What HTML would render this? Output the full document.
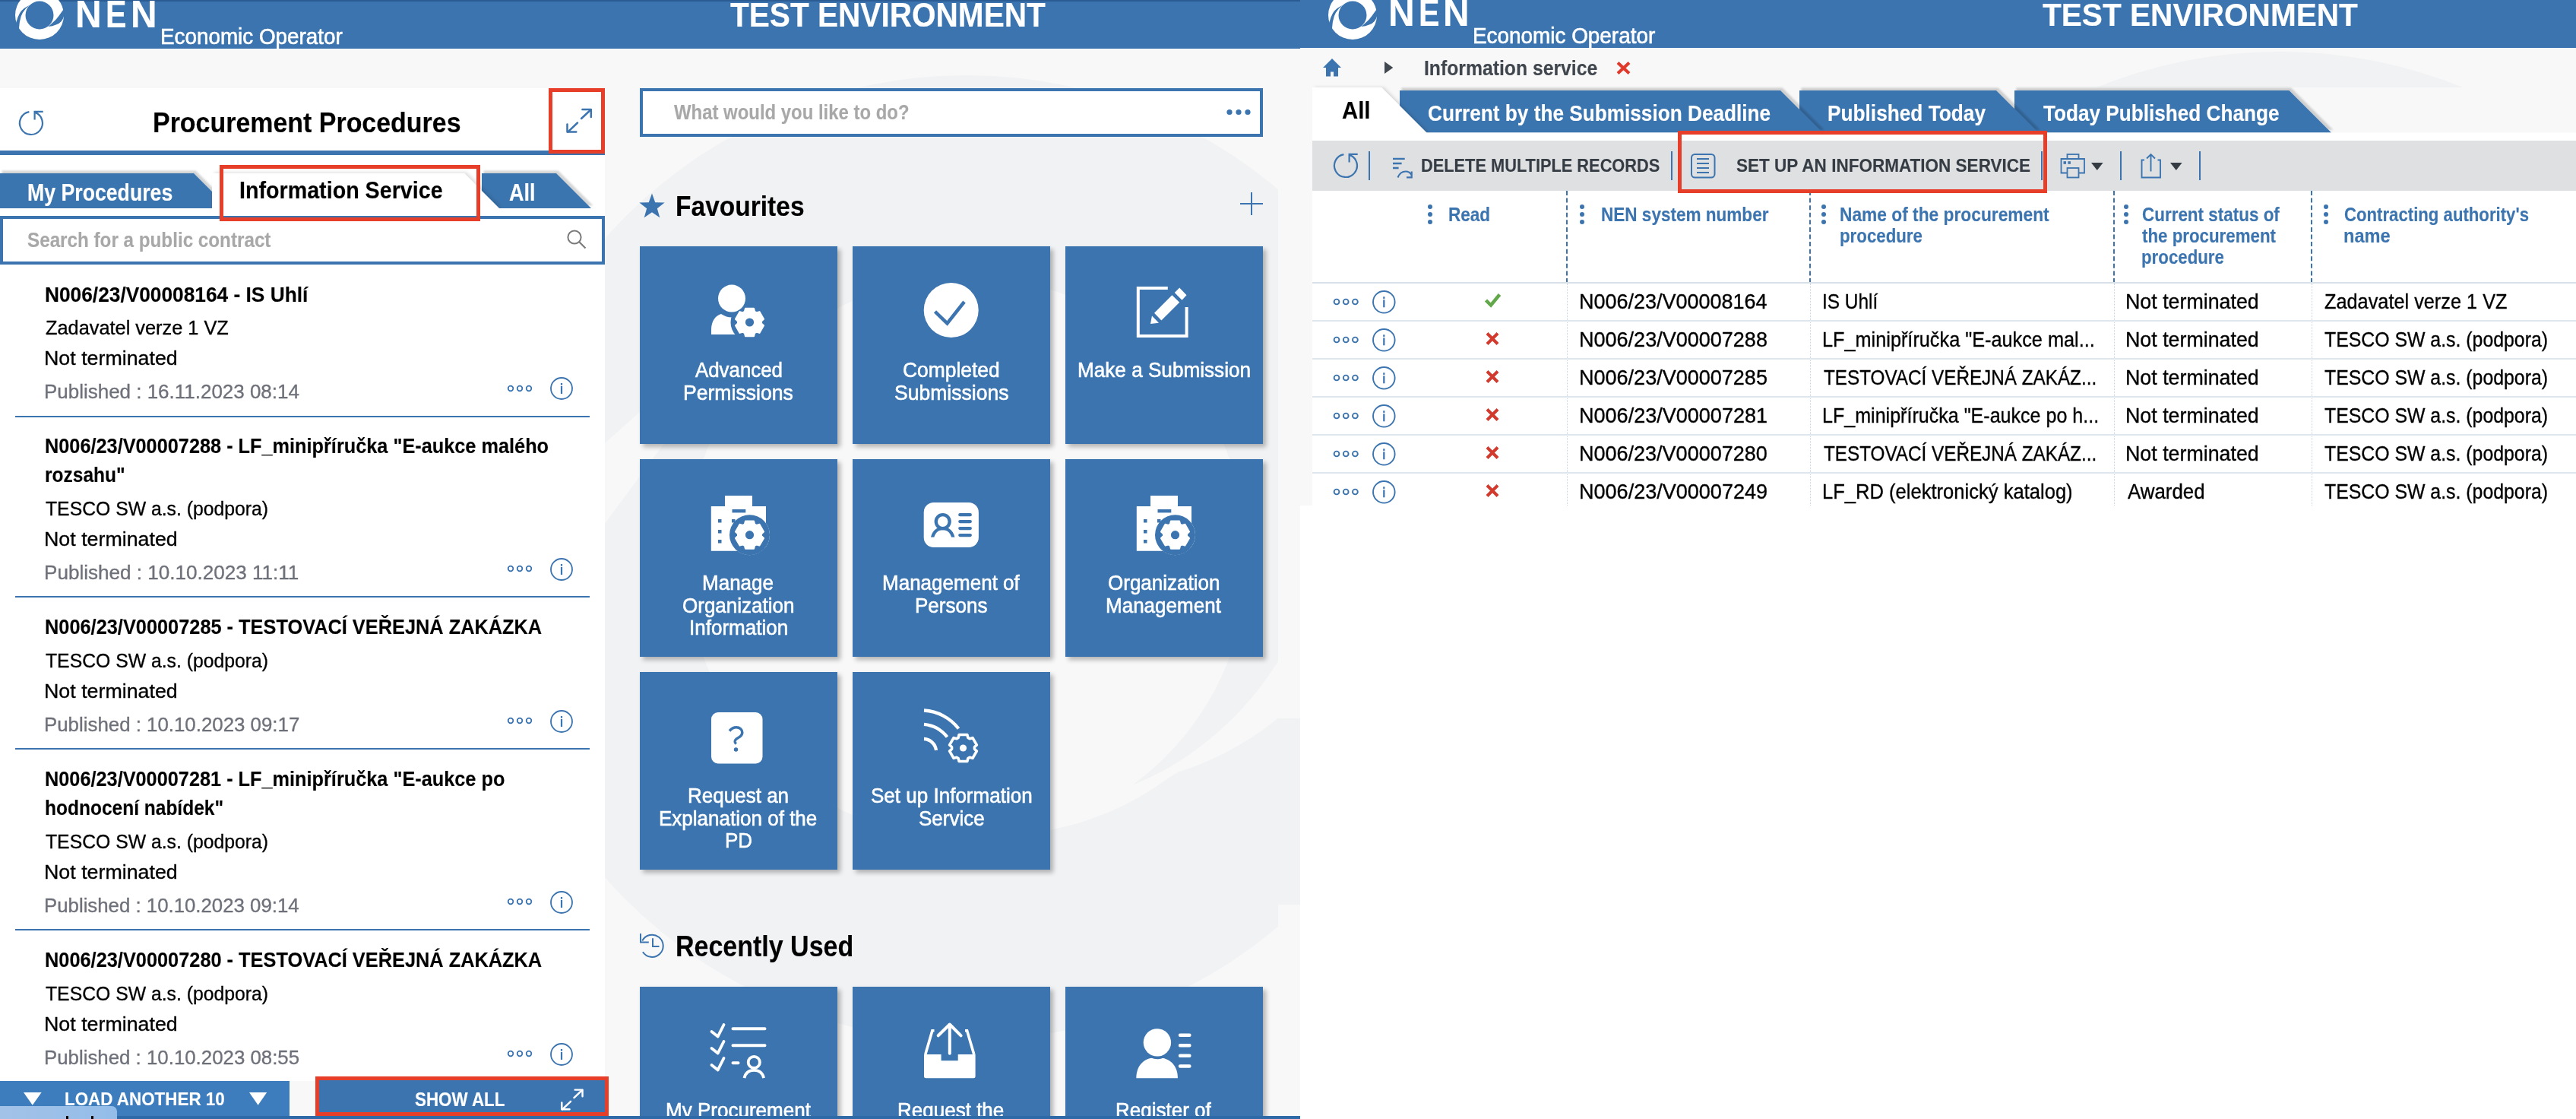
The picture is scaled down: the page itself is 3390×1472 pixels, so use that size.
<!DOCTYPE html><html><head><meta charset="utf-8"><style>html,body{margin:0;padding:0;}body{width:3390px;height:1472px;position:relative;overflow:hidden;background:#f8f8f8;font-family:"Liberation Sans",sans-serif;}</style></head><body>
<div style="position:absolute;left:796px;top:63px;width:915px;height:1409px;overflow:hidden;background:#f8f8f8">
<svg width="915" height="1409" viewBox="796 63 915 1409" style="position:absolute;left:0;top:0"><circle cx="1272" cy="734" r="635" fill="#f1f2f4"/><circle cx="1272" cy="734" r="370" fill="#f8f8f8"/><path d="M1809.9,781.1 L1800.3,800.1 L1790.0,818.4 L1779.1,836.1 L1767.6,853.1 L1755.5,869.4 L1743.0,884.9 L1729.9,899.7 L1716.4,913.8 L1702.5,927.1 L1688.3,939.6 L1673.7,951.3 L1658.8,962.2 L1643.6,972.3 L1628.2,981.5 L1612.7,990.0 L1597.0,997.7 L1581.3,1004.6 L1565.5,1010.6 L1549.6,1015.9 L1537.0,1023.9 L1525.1,1032.3 L1512.9,1040.3 L1500.4,1047.8 L1487.7,1054.7 L1474.8,1061.2 L1461.8,1067.2 L1448.6,1072.6 L1435.2,1077.5 L1421.7,1081.9 L1408.1,1085.8 L1394.5,1089.1 L1380.7,1091.9 L1367.1,1094.8 L1353.5,1097.3 L1339.8,1099.2 L1326.0,1100.6 L1312.3,1101.5 L1298.6,1101.9 L1284.8,1101.8 L1284.8,1099.8 L1298.4,1099.2 L1311.9,1098.2 L1325.5,1096.7 L1338.9,1094.6 L1352.3,1092.1 L1365.6,1089.0 L1378.8,1085.5 L1391.8,1081.4 L1404.7,1076.9 L1417.4,1071.9 L1429.9,1066.5 L1442.3,1060.6 L1454.4,1054.2 L1466.2,1047.3 L1477.9,1040.1 L1489.7,1033.1 L1502.9,1027.6 L1515.9,1021.5 L1528.8,1014.9 L1541.6,1007.7 L1554.2,1000.0 L1566.5,991.7 L1578.7,982.8 L1590.5,973.4 L1602.3,963.5 L1613.8,953.1 L1625.0,942.2 L1635.8,930.8 L1646.3,918.9 L1656.4,906.4 L1666.1,893.4 L1675.3,880.0 L1684.6,866.2 L1695.1,852.5 L1705.2,838.1 L1714.7,823.1 L1723.8,807.6 L1732.3,791.6 L1740.2,775.0Z" fill="#f8f8f8"/><path d="M1052.5,442.7 L894.9,494.7 L768.9,607.2 L690.3,724.4 L641.8,841.8 L596.4,979.6 L697.4,973.8 L731.5,816.3 L790.4,696.4 L884.4,569.3 L1004.8,468.1Z" fill="#f8f8f8"/><rect x="1682" y="241" width="29" height="704" fill="#f8f8f8"/><rect x="1682" y="945" width="29" height="245" fill="#f1f2f4"/><rect x="1682" y="1190" width="29" height="282" fill="#f8f8f8"/></svg>
</div>
<div style="position:absolute;left:0px;top:0px;width:1711px;height:63.5px;background:#3b74af;"></div>
<div style="position:absolute;left:0px;top:0px;width:1711px;height:2px;background:#2b5b93;"></div>
<svg style="position:absolute;left:0px;top:0px;overflow:visible;" width="100" height="60" viewBox="0 0 100 60"><circle cx="52" cy="20" r="32" fill="#fff"/><circle cx="52" cy="20" r="18.5" fill="#3b74af"/><path d="M39,7 Q30,10.5 26,17.2 Q23,22.5 21.3,29.8 L16,40 L25,37 Q25.6,27.9 27.7,21.5 Q29.5,16.5 31.5,14.5 Q34,10.5 39,7Z" fill="#3b74af"/><path d="M86,9 L84,21.5 Q83,25.5 80.8,27.9 Q78,31 74.4,32.2 Q69,34.5 63.1,35.1 Q66.5,32.5 69,30 Q72,27.5 74.4,24.7 Q77.5,21 79.7,17.7 L86,9Z" fill="#3b74af"/></svg>
<div style="position:absolute;left:99.48px;top:-6.22px;font-size:50.72px;line-height:50.72px;font-weight:700;color:#fff;white-space:nowrap;transform:scaleX(0.9456);transform-origin:0 0;-webkit-text-stroke:0.15px #fff;">N</div>
<div style="position:absolute;left:139.32px;top:-6.22px;font-size:50.72px;line-height:50.72px;font-weight:700;color:#fff;white-space:nowrap;transform:scaleX(0.8130);transform-origin:0 0;-webkit-text-stroke:0.15px #fff;">E</div>
<div style="position:absolute;left:171.69px;top:-6.22px;font-size:50.72px;line-height:50.72px;font-weight:700;color:#fff;white-space:nowrap;transform:scaleX(0.9423);transform-origin:0 0;-webkit-text-stroke:0.15px #fff;">N</div>
<div style="position:absolute;left:211.27px;top:34.01px;font-size:28.70px;line-height:28.70px;font-weight:400;color:#fff;white-space:nowrap;transform:scaleX(0.9702);transform-origin:0 0;-webkit-text-stroke:0.6px #fff;">Economic Operator</div>
<div style="position:absolute;left:960.59px;top:-1.36px;font-size:43.48px;line-height:43.48px;font-weight:700;color:#fff;white-space:nowrap;transform:scaleX(0.9335);transform-origin:0 0;-webkit-text-stroke:0.15px #fff;">TEST ENVIRONMENT</div>
<div style="position:absolute;left:0px;top:116px;width:796px;height:1356px;background:#fff;"></div>
<svg style="position:absolute;left:23.5px;top:144.5px;overflow:visible;" width="34" height="34" viewBox="0 0 34 34"><path d="M14.4,2.2 A15,15 0 1 0 22.1,2.9" fill="none" stroke="#3b74af" stroke-width="2.2"/><path d="M21.6,12.4 L21.6,1.8 L32.7,1.8" fill="none" stroke="#3b74af" stroke-width="2.2"/></svg>
<div style="position:absolute;left:200.59px;top:142.82px;font-size:37.39px;line-height:37.39px;font-weight:700;color:#000;white-space:nowrap;transform:scaleX(0.9081);transform-origin:0 0;-webkit-text-stroke:0.15px #000;">Procurement Procedures</div>
<svg style="position:absolute;left:745px;top:141px;overflow:visible;" width="34.0" height="34.0" viewBox="0 0 34.0 34.0"><g transform="scale(1.0)" fill="none" stroke="#3b74af" stroke-width="2.50" stroke-linecap="round" stroke-linejoin="round"><path d="M21.4,3 L32.8,3 L32.8,13"/><path d="M32.3,3.5 L20,15"/><path d="M15,20.5 L2.3,32.7"/><path d="M1.5,22.4 L1.5,32.5 L13.3,32.5"/></g></svg>
<div style="position:absolute;left:0px;top:198px;width:796px;height:5.5px;background:#3b74af;"></div>
<svg style="position:absolute;left:0;top:200px;overflow:visible" width="796" height="90" viewBox="0 200 796 90"><defs><filter id="ts" x="-10%" y="-50%" width="120%" height="200%"><feDropShadow dx="2.5" dy="-3.5" stdDeviation="1.3" flood-color="#000" flood-opacity="0.17"/></filter><filter id="tw" x="-10%" y="-50%" width="120%" height="200%"><feDropShadow dx="3" dy="-1.5" stdDeviation="2" flood-color="#000" flood-opacity="0.12"/></filter></defs><polygon points="634,228 732,228 778,274 634,274" fill="#3b74af" filter="url(#ts)"/><polygon points="0,228 255,228 301,274 0,274" fill="#3b74af" filter="url(#ts)"/><polygon points="279,228 611,228 657,274 279,274" fill="#fff" filter="url(#tw)"/><rect x="0" y="274" width="796" height="10" fill="#fff"/></svg>
<div style="position:absolute;left:35.77px;top:237.93px;font-size:30.43px;line-height:30.43px;font-weight:700;color:#fff;white-space:nowrap;transform:scaleX(0.8767);transform-origin:0 0;-webkit-text-stroke:0.15px #fff;">My Procedures</div>
<div style="position:absolute;left:314.74px;top:234.74px;font-size:31.59px;line-height:31.59px;font-weight:700;color:#000;white-space:nowrap;transform:scaleX(0.9078);transform-origin:0 0;-webkit-text-stroke:0.15px #000;">Information Service</div>
<div style="position:absolute;left:670.32px;top:237.93px;font-size:30.43px;line-height:30.43px;font-weight:700;color:#fff;white-space:nowrap;transform:scaleX(0.8873);transform-origin:0 0;-webkit-text-stroke:0.15px #fff;">All</div>
<div style="position:absolute;left:0;top:284px;width:788px;height:55.5px;border:4px solid #3b74af;background:#fff"></div>
<div style="position:absolute;left:35.77px;top:301.90px;font-size:28.12px;line-height:28.12px;font-weight:700;color:#a8a8a8;white-space:nowrap;transform:scaleX(0.8619);transform-origin:0 0;-webkit-text-stroke:0.15px #a8a8a8;">Search for a public contract</div>
<svg style="position:absolute;left:745px;top:301px;overflow:visible;" width="30" height="30" viewBox="0 0 30 30"><circle cx="11" cy="11" r="8.6" fill="none" stroke="#7a7a7a" stroke-width="2"/><path d="M17.2,17.2 L25.5,25.5" stroke="#7a7a7a" stroke-width="2.2"/></svg>
<div style="position:absolute;left:58.79px;top:373.76px;font-size:27.10px;line-height:27.10px;font-weight:700;color:#000;white-space:nowrap;transform:scaleX(0.9703);transform-origin:0 0;-webkit-text-stroke:0.15px #000;">N006/23/V00008164 - IS Uhlí</div>
<div style="position:absolute;left:59.74px;top:418.26px;font-size:26.52px;line-height:26.52px;font-weight:400;color:#000;white-space:nowrap;transform:scaleX(0.9557);transform-origin:0 0;-webkit-text-stroke:0.35px #000;">Zadavatel verze 1 VZ</div>
<div style="position:absolute;left:58.36px;top:458.26px;font-size:26.52px;line-height:26.52px;font-weight:400;color:#000;white-space:nowrap;transform:scaleX(1.0102);transform-origin:0 0;-webkit-text-stroke:0.35px #000;">Not terminated</div>
<div style="position:absolute;left:58.42px;top:502.26px;font-size:26.52px;line-height:26.52px;font-weight:400;color:#6f717a;white-space:nowrap;transform:scaleX(0.9792);transform-origin:0 0;-webkit-text-stroke:0.35px #6f717a;">Published : 16.11.2023 08:14</div>
<svg style="position:absolute;left:667px;top:505.5px;overflow:visible;" width="40" height="10" viewBox="0 0 40 10"><circle cx="5" cy="5" r="3.3" fill="none" stroke="#3b74af" stroke-width="1.8"/><circle cx="17" cy="5" r="3.3" fill="none" stroke="#3b74af" stroke-width="1.8"/><circle cx="29" cy="5" r="3.3" fill="none" stroke="#3b74af" stroke-width="1.8"/></svg>
<svg style="position:absolute;left:723px;top:495px;overflow:visible;" width="32" height="32" viewBox="0 0 32 32"><circle cx="16" cy="16" r="14" fill="none" stroke="#3b74af" stroke-width="1.8"/><rect x="14.9" y="9" width="2.2" height="2.6" fill="#3b74af"/><rect x="14.9" y="13" width="2.2" height="10" fill="#3b74af"/></svg>
<div style="position:absolute;left:20px;top:546.5px;width:756px;height:2.2px;background:#3b74af;"></div>
<div style="position:absolute;left:58.86px;top:573.26px;font-size:27.10px;line-height:27.10px;font-weight:700;color:#000;white-space:nowrap;transform:scaleX(0.9337);transform-origin:0 0;-webkit-text-stroke:0.15px #000;">N006/23/V00007288 - LF_minipříručka "E-aukce malého</div>
<div style="position:absolute;left:58.91px;top:611.26px;font-size:27.10px;line-height:27.10px;font-weight:700;color:#000;white-space:nowrap;transform:scaleX(0.9050);transform-origin:0 0;-webkit-text-stroke:0.15px #000;">rozsahu"</div>
<div style="position:absolute;left:60.00px;top:655.76px;font-size:26.52px;line-height:26.52px;font-weight:400;color:#000;white-space:nowrap;transform:scaleX(0.9334);transform-origin:0 0;-webkit-text-stroke:0.35px #000;">TESCO SW a.s. (podpora)</div>
<div style="position:absolute;left:58.36px;top:695.76px;font-size:26.52px;line-height:26.52px;font-weight:400;color:#000;white-space:nowrap;transform:scaleX(1.0102);transform-origin:0 0;-webkit-text-stroke:0.35px #000;">Not terminated</div>
<div style="position:absolute;left:58.41px;top:739.76px;font-size:26.52px;line-height:26.52px;font-weight:400;color:#6f717a;white-space:nowrap;transform:scaleX(0.9830);transform-origin:0 0;-webkit-text-stroke:0.35px #6f717a;">Published : 10.10.2023 11:11</div>
<svg style="position:absolute;left:667px;top:743.0px;overflow:visible;" width="40" height="10" viewBox="0 0 40 10"><circle cx="5" cy="5" r="3.3" fill="none" stroke="#3b74af" stroke-width="1.8"/><circle cx="17" cy="5" r="3.3" fill="none" stroke="#3b74af" stroke-width="1.8"/><circle cx="29" cy="5" r="3.3" fill="none" stroke="#3b74af" stroke-width="1.8"/></svg>
<svg style="position:absolute;left:723px;top:732.5px;overflow:visible;" width="32" height="32" viewBox="0 0 32 32"><circle cx="16" cy="16" r="14" fill="none" stroke="#3b74af" stroke-width="1.8"/><rect x="14.9" y="9" width="2.2" height="2.6" fill="#3b74af"/><rect x="14.9" y="13" width="2.2" height="10" fill="#3b74af"/></svg>
<div style="position:absolute;left:20px;top:784.0px;width:756px;height:2.2px;background:#3b74af;"></div>
<div style="position:absolute;left:58.85px;top:811.26px;font-size:27.10px;line-height:27.10px;font-weight:700;color:#000;white-space:nowrap;transform:scaleX(0.9356);transform-origin:0 0;-webkit-text-stroke:0.15px #000;">N006/23/V00007285 - TESTOVACÍ VEŘEJNÁ ZAKÁZKA</div>
<div style="position:absolute;left:60.00px;top:855.76px;font-size:26.52px;line-height:26.52px;font-weight:400;color:#000;white-space:nowrap;transform:scaleX(0.9334);transform-origin:0 0;-webkit-text-stroke:0.35px #000;">TESCO SW a.s. (podpora)</div>
<div style="position:absolute;left:58.36px;top:895.76px;font-size:26.52px;line-height:26.52px;font-weight:400;color:#000;white-space:nowrap;transform:scaleX(1.0102);transform-origin:0 0;-webkit-text-stroke:0.35px #000;">Not terminated</div>
<div style="position:absolute;left:58.43px;top:939.76px;font-size:26.52px;line-height:26.52px;font-weight:400;color:#6f717a;white-space:nowrap;transform:scaleX(0.9748);transform-origin:0 0;-webkit-text-stroke:0.35px #6f717a;">Published : 10.10.2023 09:17</div>
<svg style="position:absolute;left:667px;top:943.0px;overflow:visible;" width="40" height="10" viewBox="0 0 40 10"><circle cx="5" cy="5" r="3.3" fill="none" stroke="#3b74af" stroke-width="1.8"/><circle cx="17" cy="5" r="3.3" fill="none" stroke="#3b74af" stroke-width="1.8"/><circle cx="29" cy="5" r="3.3" fill="none" stroke="#3b74af" stroke-width="1.8"/></svg>
<svg style="position:absolute;left:723px;top:932.5px;overflow:visible;" width="32" height="32" viewBox="0 0 32 32"><circle cx="16" cy="16" r="14" fill="none" stroke="#3b74af" stroke-width="1.8"/><rect x="14.9" y="9" width="2.2" height="2.6" fill="#3b74af"/><rect x="14.9" y="13" width="2.2" height="10" fill="#3b74af"/></svg>
<div style="position:absolute;left:20px;top:984.0px;width:756px;height:2.2px;background:#3b74af;"></div>
<div style="position:absolute;left:58.86px;top:1011.26px;font-size:27.10px;line-height:27.10px;font-weight:700;color:#000;white-space:nowrap;transform:scaleX(0.9337);transform-origin:0 0;-webkit-text-stroke:0.15px #000;">N006/23/V00007281 - LF_minipříručka "E-aukce po</div>
<div style="position:absolute;left:58.78px;top:1049.26px;font-size:27.10px;line-height:27.10px;font-weight:700;color:#000;white-space:nowrap;transform:scaleX(0.9050);transform-origin:0 0;-webkit-text-stroke:0.15px #000;">hodnocení nabídek"</div>
<div style="position:absolute;left:60.00px;top:1093.76px;font-size:26.52px;line-height:26.52px;font-weight:400;color:#000;white-space:nowrap;transform:scaleX(0.9334);transform-origin:0 0;-webkit-text-stroke:0.35px #000;">TESCO SW a.s. (podpora)</div>
<div style="position:absolute;left:58.36px;top:1133.76px;font-size:26.52px;line-height:26.52px;font-weight:400;color:#000;white-space:nowrap;transform:scaleX(1.0102);transform-origin:0 0;-webkit-text-stroke:0.35px #000;">Not terminated</div>
<div style="position:absolute;left:58.44px;top:1177.76px;font-size:26.52px;line-height:26.52px;font-weight:400;color:#6f717a;white-space:nowrap;transform:scaleX(0.9729);transform-origin:0 0;-webkit-text-stroke:0.35px #6f717a;">Published : 10.10.2023 09:14</div>
<svg style="position:absolute;left:667px;top:1181.0px;overflow:visible;" width="40" height="10" viewBox="0 0 40 10"><circle cx="5" cy="5" r="3.3" fill="none" stroke="#3b74af" stroke-width="1.8"/><circle cx="17" cy="5" r="3.3" fill="none" stroke="#3b74af" stroke-width="1.8"/><circle cx="29" cy="5" r="3.3" fill="none" stroke="#3b74af" stroke-width="1.8"/></svg>
<svg style="position:absolute;left:723px;top:1170.5px;overflow:visible;" width="32" height="32" viewBox="0 0 32 32"><circle cx="16" cy="16" r="14" fill="none" stroke="#3b74af" stroke-width="1.8"/><rect x="14.9" y="9" width="2.2" height="2.6" fill="#3b74af"/><rect x="14.9" y="13" width="2.2" height="10" fill="#3b74af"/></svg>
<div style="position:absolute;left:20px;top:1222.0px;width:756px;height:2.2px;background:#3b74af;"></div>
<div style="position:absolute;left:58.85px;top:1249.26px;font-size:27.10px;line-height:27.10px;font-weight:700;color:#000;white-space:nowrap;transform:scaleX(0.9356);transform-origin:0 0;-webkit-text-stroke:0.15px #000;">N006/23/V00007280 - TESTOVACÍ VEŘEJNÁ ZAKÁZKA</div>
<div style="position:absolute;left:60.00px;top:1293.76px;font-size:26.52px;line-height:26.52px;font-weight:400;color:#000;white-space:nowrap;transform:scaleX(0.9334);transform-origin:0 0;-webkit-text-stroke:0.35px #000;">TESCO SW a.s. (podpora)</div>
<div style="position:absolute;left:58.36px;top:1333.76px;font-size:26.52px;line-height:26.52px;font-weight:400;color:#000;white-space:nowrap;transform:scaleX(1.0102);transform-origin:0 0;-webkit-text-stroke:0.35px #000;">Not terminated</div>
<div style="position:absolute;left:58.43px;top:1377.76px;font-size:26.52px;line-height:26.52px;font-weight:400;color:#6f717a;white-space:nowrap;transform:scaleX(0.9741);transform-origin:0 0;-webkit-text-stroke:0.35px #6f717a;">Published : 10.10.2023 08:55</div>
<svg style="position:absolute;left:667px;top:1381.0px;overflow:visible;" width="40" height="10" viewBox="0 0 40 10"><circle cx="5" cy="5" r="3.3" fill="none" stroke="#3b74af" stroke-width="1.8"/><circle cx="17" cy="5" r="3.3" fill="none" stroke="#3b74af" stroke-width="1.8"/><circle cx="29" cy="5" r="3.3" fill="none" stroke="#3b74af" stroke-width="1.8"/></svg>
<svg style="position:absolute;left:723px;top:1370.5px;overflow:visible;" width="32" height="32" viewBox="0 0 32 32"><circle cx="16" cy="16" r="14" fill="none" stroke="#3b74af" stroke-width="1.8"/><rect x="14.9" y="9" width="2.2" height="2.6" fill="#3b74af"/><rect x="14.9" y="13" width="2.2" height="10" fill="#3b74af"/></svg>
<div style="position:absolute;left:0px;top:1422px;width:381px;height:50px;background:#3d7dbd;"></div>
<div style="position:absolute;left:381px;top:1422px;width:34px;height:50px;background:#f8f8f8;"></div>
<div style="position:absolute;left:419px;top:1421px;width:377px;height:47px;background:#3b74af;"></div>
<div style="position:absolute;left:84.94px;top:1434.46px;font-size:24.64px;line-height:24.64px;font-weight:700;color:#fff;white-space:nowrap;transform:scaleX(0.9095);transform-origin:0 0;-webkit-text-stroke:0.15px #fff;">LOAD ANOTHER 10</div>
<svg style="position:absolute;left:31px;top:1437px;overflow:visible;" width="24" height="17" viewBox="0 0 24 17"><polygon points="0,0 23.6,0 11.8,16.8" fill="#fff"/></svg>
<svg style="position:absolute;left:327.5px;top:1437px;overflow:visible;" width="24" height="17" viewBox="0 0 24 17"><polygon points="0,0 23.2,0 11.6,16.8" fill="#fff"/></svg>
<div style="position:absolute;left:545.83px;top:1434.07px;font-size:25.22px;line-height:25.22px;font-weight:700;color:#fff;white-space:nowrap;transform:scaleX(0.8863);transform-origin:0 0;-webkit-text-stroke:0.15px #fff;">SHOW ALL</div>
<svg style="position:absolute;left:738px;top:1431px;overflow:visible;" width="29.58" height="29.58" viewBox="0 0 29.58 29.58"><g transform="scale(0.87)" fill="none" stroke="#fff" stroke-width="2.76" stroke-linecap="round" stroke-linejoin="round"><path d="M21.4,3 L32.8,3 L32.8,13"/><path d="M32.3,3.5 L20,15"/><path d="M15,20.5 L2.3,32.7"/><path d="M1.5,22.4 L1.5,32.5 L13.3,32.5"/></g></svg>
<div style="position:absolute;left:0;top:1454.5px;width:154px;height:30px;background:linear-gradient(90deg,#a3c2e8,#93bde9);border-radius:0 7px 0 0"></div>
<div style="position:absolute;left:87px;top:1468px;width:2.5px;height:4px;background:#000;"></div>
<div style="position:absolute;left:120px;top:1468px;width:2.5px;height:4px;background:#000;"></div>
<div style="position:absolute;left:154px;top:1467.5px;width:1557px;height:5px;background:#2f6aa8;"></div>
<div style="position:absolute;left:842px;top:116px;width:812px;height:55.8px;border:4px solid #3b74af;background:#fff"></div>
<div style="position:absolute;left:886.70px;top:134.39px;font-size:27.54px;line-height:27.54px;font-weight:700;color:#a8a8a8;white-space:nowrap;transform:scaleX(0.8686);transform-origin:0 0;-webkit-text-stroke:0.15px #a8a8a8;">What would you like to do?</div>
<svg style="position:absolute;left:1610px;top:142px;overflow:visible;" width="40" height="12" viewBox="0 0 40 12"><circle cx="8" cy="5.5" r="3.6" fill="#3b74af"/><circle cx="20" cy="5.5" r="3.6" fill="#3b74af"/><circle cx="32" cy="5.5" r="3.6" fill="#3b74af"/></svg>
<svg style="position:absolute;left:838px;top:250px;overflow:visible;" width="40" height="40" viewBox="0 0 40 40"><polygon points="20.00,4.50 24.23,16.18 36.64,16.59 26.85,24.22 30.29,36.16 20.00,29.20 9.71,36.16 13.15,24.22 3.36,16.59 15.77,16.18" fill="#3b74af"/></svg>
<div style="position:absolute;left:888.82px;top:253.07px;font-size:37.68px;line-height:37.68px;font-weight:700;color:#000;white-space:nowrap;transform:scaleX(0.8900);transform-origin:0 0;-webkit-text-stroke:0.15px #000;">Favourites</div>
<svg style="position:absolute;left:1630px;top:251px;overflow:visible;" width="34" height="34" viewBox="0 0 34 34"><path d="M17,2 L17,32 M2,17 L32,17" stroke="#3b74af" stroke-width="2"/></svg>
<div style="position:absolute;left:842px;top:324px;width:260px;height:260px;background:#3b74af;box-shadow:4px 4px 6px rgba(0,0,0,0.28)"></div>
<div style="position:absolute;left:1122px;top:324px;width:260px;height:260px;background:#3b74af;box-shadow:4px 4px 6px rgba(0,0,0,0.28)"></div>
<div style="position:absolute;left:1402px;top:324px;width:260px;height:260px;background:#3b74af;box-shadow:4px 4px 6px rgba(0,0,0,0.28)"></div>
<div style="position:absolute;left:842px;top:604px;width:260px;height:260px;background:#3b74af;box-shadow:4px 4px 6px rgba(0,0,0,0.28)"></div>
<div style="position:absolute;left:1122px;top:604px;width:260px;height:260px;background:#3b74af;box-shadow:4px 4px 6px rgba(0,0,0,0.28)"></div>
<div style="position:absolute;left:1402px;top:604px;width:260px;height:260px;background:#3b74af;box-shadow:4px 4px 6px rgba(0,0,0,0.28)"></div>
<div style="position:absolute;left:842px;top:884px;width:260px;height:260px;background:#3b74af;box-shadow:4px 4px 6px rgba(0,0,0,0.28)"></div>
<div style="position:absolute;left:1122px;top:884px;width:260px;height:260px;background:#3b74af;box-shadow:4px 4px 6px rgba(0,0,0,0.28)"></div>
<div style="position:absolute;left:842px;top:1298px;width:260px;height:260px;background:#3b74af;box-shadow:4px 4px 6px rgba(0,0,0,0.28)"></div>
<div style="position:absolute;left:1122px;top:1298px;width:260px;height:260px;background:#3b74af;box-shadow:4px 4px 6px rgba(0,0,0,0.28)"></div>
<div style="position:absolute;left:1402px;top:1298px;width:260px;height:260px;background:#3b74af;box-shadow:4px 4px 6px rgba(0,0,0,0.28)"></div>
<svg style="position:absolute;left:842px;top:324px;overflow:visible;" width="260" height="260" viewBox="0 0 260 260"><path d="M94,116 L94,110 C94,98 100,91 107,89 C112,92 116,93.5 121,93.5 L150,93.5 L150,116Z" fill="#fff"/><circle cx="121" cy="68.6" r="21.5" fill="#3b74af"/><circle cx="144.5" cy="100" r="25" fill="#3b74af"/><circle cx="121" cy="68.6" r="18" fill="#fff"/><path d="M137.91,85.86 L138.94,81.83 L150.06,81.83 L151.09,85.86 L153.45,87.22 L157.46,86.10 L163.01,95.73 L160.04,98.64 L160.04,101.36 L163.01,104.27 L157.46,113.90 L153.45,112.78 L151.09,114.14 L150.06,118.17 L138.94,118.17 L137.91,114.14 L135.55,112.78 L131.54,113.90 L125.99,104.27 L128.96,101.36 L128.96,98.64 L125.99,95.73 L131.54,86.10 L135.55,87.22Z M151.1,100 A6.6,6.6 0 1 0 137.9,100 A6.6,6.6 0 1 0 151.1,100Z" fill="#fff" stroke="#fff" stroke-width="2" stroke-linejoin="round" fill-rule="evenodd"/></svg>
<svg style="position:absolute;left:1122px;top:324px;overflow:visible;" width="260" height="260" viewBox="0 0 260 260"><circle cx="129.7" cy="84" r="36" fill="#fff"/><path d="M108.5,85.8 L124.5,101.3 L147,73" fill="none" stroke="#3b74af" stroke-width="4.5"/></svg>
<svg style="position:absolute;left:1402px;top:324px;overflow:visible;" width="260" height="260" viewBox="0 0 260 260"><path d="M134.8,55 L95.8,55 L95.8,118 L159.6,118 L159.6,80" fill="none" stroke="#fff" stroke-width="4"/><path d="M117,87.7 L140.4,64.3 L150.2,73.7 L126.4,97.5Z" fill="#fff"/><path d="M114,91.5 L112,102.1 L123,100.8Z" fill="#fff"/><path d="M143.8,61 L150.2,54.6 L159.5,64.3 L153.5,70.7Z" fill="#fff"/></svg>
<svg style="position:absolute;left:842px;top:604px;overflow:visible;" width="260" height="260" viewBox="0 0 260 260"><path d="M93.8,120.8 L93.8,62 L112,62 L112,48 L148,48 L148,62 L166,62 L166,84.2 A26.5,26.5 0 0 1 128.5,120.8Z" fill="#fff"/><rect x="121.5" y="66" width="17.8" height="4.4" fill="#3b74af"/><rect x="103" y="79" width="4.5" height="4.5" fill="#3b74af"/><rect x="103" y="93" width="4.5" height="4.5" fill="#3b74af"/><rect x="103" y="106" width="4.5" height="4.5" fill="#3b74af"/><rect x="121" y="79" width="4.5" height="4.5" fill="#3b74af"/><circle cx="144.5" cy="99.7" r="26.5" fill="#3b74af"/><path d="M137.91,85.56 L138.94,81.53 L150.06,81.53 L151.09,85.56 L153.45,86.92 L157.46,85.80 L163.01,95.43 L160.04,98.34 L160.04,101.06 L163.01,103.97 L157.46,113.60 L153.45,112.48 L151.09,113.84 L150.06,117.87 L138.94,117.87 L137.91,113.84 L135.55,112.48 L131.54,113.60 L125.99,103.97 L128.96,101.06 L128.96,98.34 L125.99,95.43 L131.54,85.80 L135.55,86.92Z M151.1,99.7 A6.6,6.6 0 1 0 137.9,99.7 A6.6,6.6 0 1 0 151.1,99.7Z" fill="#fff" stroke="#fff" stroke-width="2" stroke-linejoin="round" fill-rule="evenodd"/></svg>
<svg style="position:absolute;left:1402px;top:604px;overflow:visible;" width="260" height="260" viewBox="0 0 260 260"><path d="M93.8,120.8 L93.8,62 L112,62 L112,48 L148,48 L148,62 L166,62 L166,84.2 A26.5,26.5 0 0 1 128.5,120.8Z" fill="#fff"/><rect x="121.5" y="66" width="17.8" height="4.4" fill="#3b74af"/><rect x="103" y="79" width="4.5" height="4.5" fill="#3b74af"/><rect x="103" y="93" width="4.5" height="4.5" fill="#3b74af"/><rect x="103" y="106" width="4.5" height="4.5" fill="#3b74af"/><rect x="121" y="79" width="4.5" height="4.5" fill="#3b74af"/><circle cx="144.5" cy="99.7" r="26.5" fill="#3b74af"/><path d="M137.91,85.56 L138.94,81.53 L150.06,81.53 L151.09,85.56 L153.45,86.92 L157.46,85.80 L163.01,95.43 L160.04,98.34 L160.04,101.06 L163.01,103.97 L157.46,113.60 L153.45,112.48 L151.09,113.84 L150.06,117.87 L138.94,117.87 L137.91,113.84 L135.55,112.48 L131.54,113.60 L125.99,103.97 L128.96,101.06 L128.96,98.34 L125.99,95.43 L131.54,85.80 L135.55,86.92Z M151.1,99.7 A6.6,6.6 0 1 0 137.9,99.7 A6.6,6.6 0 1 0 151.1,99.7Z" fill="#fff" stroke="#fff" stroke-width="2" stroke-linejoin="round" fill-rule="evenodd"/></svg>
<svg style="position:absolute;left:1122px;top:604px;overflow:visible;" width="260" height="260" viewBox="0 0 260 260"><rect x="93.7" y="57" width="72.2" height="59" rx="13" fill="#fff"/><circle cx="118.7" cy="82.1" r="8.95" fill="none" stroke="#3b74af" stroke-width="4.3"/><path d="M104.5,106 C106,96 111.5,91.2 118.7,91.2 C125.9,91.2 131.4,96 132.9,106" fill="none" stroke="#3b74af" stroke-width="4.3"/><rect x="100" y="102.6" width="37" height="6" fill="#fff"/><path d="M141.3,73.2 L154.8,73.2 M141.3,82.1 L154.8,82.1 M141.3,91.1 L154.8,91.1 M141.3,100.1 L154.8,100.1" stroke="#3b74af" stroke-width="4.3" stroke-linecap="round"/></svg>
<svg style="position:absolute;left:842px;top:884px;overflow:visible;" width="260" height="260" viewBox="0 0 260 260"><rect x="94" y="53" width="67.5" height="67.5" rx="9" fill="#fff"/><path d="M118,77.5 C121,74 124,72.8 127,72.8 C131.5,72.8 134.8,75.8 134.8,79.5 C134.8,83 132.5,85 129.5,86.5 C126.5,88 125,90 125.2,92 C125.4,93 126,93.8 126.8,94.5" fill="none" stroke="#3b74af" stroke-width="3.5"/><circle cx="126.5" cy="102" r="2.7" fill="#3b74af"/></svg>
<svg style="position:absolute;left:1122px;top:884px;overflow:visible;" width="260" height="260" viewBox="0 0 260 260"><path d="M94,50.5 A62,62 0 0 1 139.5,74.5 M94,68.8 A44,44 0 0 1 124.5,85.5 M94,88 A17,17 0 0 1 110,103" fill="none" stroke="#fff" stroke-width="4.3"/><path d="M139.16,86.41 L140.15,82.50 L150.85,82.50 L151.84,86.41 L154.10,87.71 L157.98,86.62 L163.33,95.88 L160.44,98.69 L160.44,101.31 L163.33,104.12 L157.98,113.38 L154.10,112.29 L151.84,113.59 L150.85,117.50 L140.15,117.50 L139.16,113.59 L136.90,112.29 L133.02,113.38 L127.67,104.12 L130.56,101.31 L130.56,98.69 L127.67,95.88 L133.02,86.62 L136.90,87.71Z" fill="none" stroke="#fff" stroke-width="3.6" stroke-linejoin="round"/><circle cx="145.5" cy="100" r="4.6" fill="#fff"/></svg>
<svg style="position:absolute;left:842px;top:1298px;overflow:visible;" width="260" height="260" viewBox="0 0 260 260"><path d="M94.5,59 L102.7,65.5 L110.5,50 M94.5,81 L102.7,87.5 L110.5,72 M94.5,103 L102.7,109.5 L110.5,94" fill="none" stroke="#fff" stroke-width="3.8" stroke-linecap="round" stroke-linejoin="round"/><path d="M122.5,55.2 L164.5,55.2 M122.5,77.3 L164.5,77.3 M122.5,100.2 L129.5,100.2" stroke="#fff" stroke-width="4" stroke-linecap="round"/><circle cx="150.3" cy="99.4" r="7.6" fill="none" stroke="#fff" stroke-width="3.8"/><path d="M137.5,120.2 C139,113 144,109.8 150.3,109.8 C156.6,109.8 161.6,113 163.1,120.2" fill="none" stroke="#fff" stroke-width="3.8"/></svg>
<svg style="position:absolute;left:1122px;top:1298px;overflow:visible;" width="260" height="260" viewBox="0 0 260 260"><path d="M94,89 L116.6,89 L116.6,97.3 L138.7,97.3 L138.7,89 L161.6,89 L161.6,117.7 Q161.6,120.2 159.1,120.2 L96.5,120.2 Q94,120.2 94,117.7Z" fill="#fff"/><path d="M107.5,57.8 L104.9,57.8 L95.8,89 M148,57.8 L150.6,57.8 L159.8,89" fill="none" stroke="#fff" stroke-width="3.6"/><path d="M127.8,87.7 L127.8,50.5 M112.7,64.3 L127.8,49.5 L142.6,64.3" fill="none" stroke="#fff" stroke-width="4" stroke-linecap="round" stroke-linejoin="round"/></svg>
<svg style="position:absolute;left:1402px;top:1298px;overflow:visible;" width="260" height="260" viewBox="0 0 260 260"><path d="M93.3,120.2 C93.3,103 104,92.9 120.6,92.9 C137.2,92.9 147.9,103 147.9,120.2Z" fill="#fff"/><circle cx="120.9" cy="73.4" r="21.8" fill="#3b74af"/><circle cx="120.9" cy="73.4" r="18.2" fill="#fff"/><path d="M151,63.8 L163.4,63.8 M151,77.3 L163.4,77.3 M151,90.7 L163.4,90.7 M151,104.5 L163.4,104.5" stroke="#fff" stroke-width="4.4" stroke-linecap="round"/></svg>
<div style="position:absolute;left:915.35px;top:473.15px;font-size:27.83px;line-height:27.83px;font-weight:400;color:#fff;white-space:nowrap;transform:scaleX(0.9286);transform-origin:0 0;-webkit-text-stroke:0.6px #fff;">Advanced</div>
<div style="position:absolute;left:899.02px;top:502.75px;font-size:27.83px;line-height:27.83px;font-weight:400;color:#fff;white-space:nowrap;transform:scaleX(0.9554);transform-origin:0 0;-webkit-text-stroke:0.6px #fff;">Permissions</div>
<div style="position:absolute;left:1188.33px;top:473.15px;font-size:27.83px;line-height:27.83px;font-weight:400;color:#fff;white-space:nowrap;transform:scaleX(0.9484);transform-origin:0 0;-webkit-text-stroke:0.6px #fff;">Completed</div>
<div style="position:absolute;left:1176.66px;top:502.75px;font-size:27.83px;line-height:27.83px;font-weight:400;color:#fff;white-space:nowrap;transform:scaleX(0.9534);transform-origin:0 0;-webkit-text-stroke:0.6px #fff;">Submissions</div>
<div style="position:absolute;left:1417.76px;top:473.15px;font-size:27.83px;line-height:27.83px;font-weight:400;color:#fff;white-space:nowrap;transform:scaleX(0.9389);transform-origin:0 0;-webkit-text-stroke:0.6px #fff;">Make a Submission</div>
<div style="position:absolute;left:924.45px;top:753.15px;font-size:27.83px;line-height:27.83px;font-weight:400;color:#fff;white-space:nowrap;transform:scaleX(0.9350);transform-origin:0 0;-webkit-text-stroke:0.6px #fff;">Manage</div>
<div style="position:absolute;left:898.44px;top:782.75px;font-size:27.83px;line-height:27.83px;font-weight:400;color:#fff;white-space:nowrap;transform:scaleX(0.9350);transform-origin:0 0;-webkit-text-stroke:0.6px #fff;">Organization</div>
<div style="position:absolute;left:906.57px;top:812.35px;font-size:27.83px;line-height:27.83px;font-weight:400;color:#fff;white-space:nowrap;transform:scaleX(0.9350);transform-origin:0 0;-webkit-text-stroke:0.6px #fff;">Information</div>
<div style="position:absolute;left:1160.55px;top:753.15px;font-size:27.83px;line-height:27.83px;font-weight:400;color:#fff;white-space:nowrap;transform:scaleX(0.9350);transform-origin:0 0;-webkit-text-stroke:0.6px #fff;">Management of</div>
<div style="position:absolute;left:1203.67px;top:782.75px;font-size:27.83px;line-height:27.83px;font-weight:400;color:#fff;white-space:nowrap;transform:scaleX(0.9350);transform-origin:0 0;-webkit-text-stroke:0.6px #fff;">Persons</div>
<div style="position:absolute;left:1458.44px;top:753.15px;font-size:27.83px;line-height:27.83px;font-weight:400;color:#fff;white-space:nowrap;transform:scaleX(0.9350);transform-origin:0 0;-webkit-text-stroke:0.6px #fff;">Organization</div>
<div style="position:absolute;left:1455.12px;top:782.75px;font-size:27.83px;line-height:27.83px;font-weight:400;color:#fff;white-space:nowrap;transform:scaleX(0.9350);transform-origin:0 0;-webkit-text-stroke:0.6px #fff;">Management</div>
<div style="position:absolute;left:905.20px;top:1033.15px;font-size:27.83px;line-height:27.83px;font-weight:400;color:#fff;white-space:nowrap;transform:scaleX(0.9350);transform-origin:0 0;-webkit-text-stroke:0.6px #fff;">Request an</div>
<div style="position:absolute;left:867.35px;top:1062.75px;font-size:27.83px;line-height:27.83px;font-weight:400;color:#fff;white-space:nowrap;transform:scaleX(0.9350);transform-origin:0 0;-webkit-text-stroke:0.6px #fff;">Explanation of the</div>
<div style="position:absolute;left:953.53px;top:1092.35px;font-size:27.83px;line-height:27.83px;font-weight:400;color:#fff;white-space:nowrap;transform:scaleX(0.9350);transform-origin:0 0;-webkit-text-stroke:0.6px #fff;">PD</div>
<div style="position:absolute;left:1145.91px;top:1033.15px;font-size:27.83px;line-height:27.83px;font-weight:400;color:#fff;white-space:nowrap;transform:scaleX(0.9350);transform-origin:0 0;-webkit-text-stroke:0.6px #fff;">Set up Information</div>
<div style="position:absolute;left:1208.55px;top:1062.75px;font-size:27.83px;line-height:27.83px;font-weight:400;color:#fff;white-space:nowrap;transform:scaleX(0.9350);transform-origin:0 0;-webkit-text-stroke:0.6px #fff;">Service</div>
<div style="position:absolute;left:875.61px;top:1447.15px;font-size:27.83px;line-height:27.83px;font-weight:400;color:#fff;white-space:nowrap;transform:scaleX(0.9350);transform-origin:0 0;-webkit-text-stroke:0.6px #fff;">My Procurement</div>
<div style="position:absolute;left:1181.36px;top:1447.15px;font-size:27.83px;line-height:27.83px;font-weight:400;color:#fff;white-space:nowrap;transform:scaleX(0.9350);transform-origin:0 0;-webkit-text-stroke:0.6px #fff;">Request the</div>
<div style="position:absolute;left:1468.00px;top:1447.15px;font-size:27.83px;line-height:27.83px;font-weight:400;color:#fff;white-space:nowrap;transform:scaleX(0.9350);transform-origin:0 0;-webkit-text-stroke:0.6px #fff;">Register of</div>
<svg style="position:absolute;left:840px;top:1226px;overflow:visible;" width="36" height="36" viewBox="0 0 36 36"><path d="M5.2,11.5 A14.6,14.6 0 1 1 5.9,26.3" fill="none" stroke="#3b74af" stroke-width="2"/><path d="M3,2 L3,13.5 L13.8,13.5" fill="none" stroke="#3b74af" stroke-width="2"/><path d="M19,8.3 L19,19 L27.5,19" fill="none" stroke="#3b74af" stroke-width="2"/></svg>
<div style="position:absolute;left:888.69px;top:1225.91px;font-size:38.70px;line-height:38.70px;font-weight:700;color:#000;white-space:nowrap;transform:scaleX(0.8785);transform-origin:0 0;-webkit-text-stroke:0.15px #000;">Recently Used</div>
<div style="position:absolute;left:154px;top:1467.5px;width:1557px;height:4.5px;background:#2f6aa8;"></div>
<div style="position:absolute;left:722.4px;top:116.3px;width:63.60000000000002px;height:76.00000000000001px;border:5px solid #e63e28;"></div>
<div style="position:absolute;left:288.6px;top:216.7px;width:333.4px;height:64.19999999999999px;border:5px solid #e63e28;"></div>
<div style="position:absolute;left:414.5px;top:1416.3px;width:376.70000000000005px;height:42.0px;border:5px solid #e63e28;"></div>
<div style="position:absolute;left:1711px;top:0px;width:1679px;height:1472px;background:#fff;"></div>
<div style="position:absolute;left:1711px;top:62px;width:1679px;height:123px;overflow:hidden;background:#f8f8f8">
<svg width="1679" height="53" viewBox="1711 62 1679 53" style="position:absolute;left:0;top:0"><circle cx="3000" cy="711" r="643" fill="#f1f2f4"/></svg>
</div>
<div style="position:absolute;left:1711px;top:62px;width:16px;height:603px;background:#f8f8f8;"></div>
<div style="position:absolute;left:1711px;top:0px;width:1679px;height:62.5px;background:#3b74af;"></div>
<svg style="position:absolute;left:1727.6px;top:0px;overflow:visible;" width="100" height="60" viewBox="0 0 100 60"><circle cx="52" cy="20" r="32" fill="#fff"/><circle cx="52" cy="20" r="18.5" fill="#3b74af"/><path d="M39,7 Q30,10.5 26,17.2 Q23,22.5 21.3,29.8 L16,40 L25,37 Q25.6,27.9 27.7,21.5 Q29.5,16.5 31.5,14.5 Q34,10.5 39,7Z" fill="#3b74af"/><path d="M86,9 L84,21.5 Q83,25.5 80.8,27.9 Q78,31 74.4,32.2 Q69,34.5 63.1,35.1 Q66.5,32.5 69,30 Q72,27.5 74.4,24.7 Q77.5,21 79.7,17.7 L86,9Z" fill="#3b74af"/></svg>
<div style="position:absolute;left:1826.98px;top:-7.72px;font-size:50.72px;line-height:50.72px;font-weight:700;color:#fff;white-space:nowrap;transform:scaleX(0.9456);transform-origin:0 0;-webkit-text-stroke:0.15px #fff;">N</div>
<div style="position:absolute;left:1866.82px;top:-7.72px;font-size:50.72px;line-height:50.72px;font-weight:700;color:#fff;white-space:nowrap;transform:scaleX(0.8130);transform-origin:0 0;-webkit-text-stroke:0.15px #fff;">E</div>
<div style="position:absolute;left:1899.19px;top:-7.72px;font-size:50.72px;line-height:50.72px;font-weight:700;color:#fff;white-space:nowrap;transform:scaleX(0.9423);transform-origin:0 0;-webkit-text-stroke:0.15px #fff;">N</div>
<div style="position:absolute;left:1938.17px;top:33.01px;font-size:28.70px;line-height:28.70px;font-weight:400;color:#fff;white-space:nowrap;transform:scaleX(0.9718);transform-origin:0 0;-webkit-text-stroke:0.6px #fff;">Economic Operator</div>
<div style="position:absolute;left:2687.89px;top:-2.44px;font-size:42.75px;line-height:42.75px;font-weight:700;color:#fff;white-space:nowrap;transform:scaleX(0.9494);transform-origin:0 0;-webkit-text-stroke:0.15px #fff;">TEST ENVIRONMENT</div>
<svg style="position:absolute;left:1741px;top:77px;overflow:visible;" width="25" height="25" viewBox="0 0 25 25"><path d="M0,12 L12,0 L24,12 L20,12 L20,23.6 L14,23.6 L14,17.5 L10,17.5 L10,23.6 L4,23.6 L4,12Z" fill="#3b74af"/></svg>
<svg style="position:absolute;left:1822px;top:81px;overflow:visible;" width="12" height="17" viewBox="0 0 12 17"><polygon points="0,0 11.3,8 0,16" fill="#42484f"/></svg>
<div style="position:absolute;left:1874.39px;top:75.57px;font-size:27.68px;line-height:27.68px;font-weight:700;color:#40464d;white-space:nowrap;transform:scaleX(0.8942);transform-origin:0 0;-webkit-text-stroke:0.15px #40464d;">Information service</div>
<svg style="position:absolute;left:2127px;top:81px;overflow:visible;" width="19" height="17" viewBox="0 0 19 17"><path d="M2,1.5 L17,15.5 M17,1.5 L2,15.5" stroke="#e0392b" stroke-width="4"/></svg>
<svg style="position:absolute;left:1711px;top:100px;overflow:visible" width="1679" height="90" viewBox="1711 100 1679 90"><defs><filter id="ts2" x="-10%" y="-50%" width="120%" height="200%"><feDropShadow dx="2.5" dy="-3.5" stdDeviation="1.3" flood-color="#000" flood-opacity="0.17"/></filter><filter id="tw2" x="-10%" y="-50%" width="120%" height="200%"><feDropShadow dx="3" dy="0" stdDeviation="2" flood-color="#000" flood-opacity="0.14"/></filter></defs><polygon points="2651,119 3012.5,119 3068,174.5 2651,174.5" fill="#3b74af" filter="url(#ts2)"/><polygon points="2368,119 2627,119 2682.5,174.5 2368,174.5" fill="#3b74af" filter="url(#ts2)"/><polygon points="1842,119 2343,119 2398.5,174.5 1842,174.5" fill="#3b74af" filter="url(#ts2)"/><polygon points="1727,115 1818,115 1878,175 1727,175" fill="#fff" filter="url(#tw2)"/><rect x="1727" y="174.5" width="1663" height="11" fill="#fff"/></svg>
<div style="position:absolute;left:1766.27px;top:129.93px;font-size:30.43px;line-height:30.43px;font-weight:700;color:#000;white-space:nowrap;transform:scaleX(0.9649);transform-origin:0 0;-webkit-text-stroke:0.15px #000;">All</div>
<div style="position:absolute;left:1879.45px;top:134.99px;font-size:28.84px;line-height:28.84px;font-weight:700;color:#fff;white-space:nowrap;transform:scaleX(0.9085);transform-origin:0 0;-webkit-text-stroke:0.15px #fff;">Current by the Submission Deadline</div>
<div style="position:absolute;left:2404.79px;top:134.69px;font-size:28.84px;line-height:28.84px;font-weight:700;color:#fff;white-space:nowrap;transform:scaleX(0.9102);transform-origin:0 0;-webkit-text-stroke:0.15px #fff;">Published Today</div>
<div style="position:absolute;left:2688.74px;top:134.89px;font-size:28.84px;line-height:28.84px;font-weight:700;color:#fff;white-space:nowrap;transform:scaleX(0.9074);transform-origin:0 0;-webkit-text-stroke:0.15px #fff;">Today Published Change</div>
<div style="position:absolute;left:1727px;top:185px;width:1663px;height:65.5px;background:#dfe0e2;"></div>
<svg style="position:absolute;left:1754px;top:200.5px;overflow:visible;" width="34" height="34" viewBox="0 0 34 34"><path d="M14.4,2.2 A15,15 0 1 0 22.1,2.9" fill="none" stroke="#3b74af" stroke-width="2.2"/><path d="M21.6,12.4 L21.6,1.8 L32.7,1.8" fill="none" stroke="#3b74af" stroke-width="2.2"/></svg>
<div style="position:absolute;left:1800.9px;top:199px;width:2.2px;height:37.5px;background:#3b74af;"></div>
<svg style="position:absolute;left:1830px;top:205px;overflow:visible;" width="32" height="32" viewBox="0 0 32 32"><path d="M3,3.9 L18.7,3.9 M3,10 L14.6,10 M3,16 L10.6,16" stroke="#3b74af" stroke-width="2.4"/><path d="M9.5,28.5 C12,22 16,20.5 20,20.5 C24,20.5 26,22.5 27.5,25" fill="none" stroke="#3b74af" stroke-width="2.2"/><path d="M27.7,20.5 L27.7,28.3 L21,28.3" fill="none" stroke="#3b74af" stroke-width="2.2"/></svg>
<div style="position:absolute;left:1870.28px;top:205.93px;font-size:24.20px;line-height:24.20px;font-weight:700;color:#363c44;white-space:nowrap;transform:scaleX(0.9008);transform-origin:0 0;-webkit-text-stroke:0.15px #363c44;">DELETE MULTIPLE RECORDS</div>
<div style="position:absolute;left:2198.9px;top:199px;width:2.2px;height:37.5px;background:#3b74af;"></div>
<svg style="position:absolute;left:2224px;top:201px;overflow:visible;" width="34" height="34" viewBox="0 0 34 34"><rect x="2" y="2" width="30.5" height="30.5" rx="4.5" fill="none" stroke="#3b74af" stroke-width="2"/><path d="M9,8 L25,8 M9,14 L25,14 M9,20 L25,20 M9,26 L25,26" stroke="#3b74af" stroke-width="2"/></svg>
<div style="position:absolute;left:2284.72px;top:205.90px;font-size:24.35px;line-height:24.35px;font-weight:700;color:#363c44;white-space:nowrap;transform:scaleX(0.9251);transform-origin:0 0;-webkit-text-stroke:0.15px #363c44;">SET UP AN INFORMATION SERVICE</div>
<div style="position:absolute;left:2685.6px;top:199px;width:2.2px;height:37.5px;background:#3b74af;"></div>
<svg style="position:absolute;left:2710px;top:200px;overflow:visible;" width="36" height="36" viewBox="0 0 36 36"><g fill="none" stroke="#3b74af" stroke-width="1.8"><rect x="10.5" y="3" width="15" height="6"/><path d="M10.5,27.5 L2.5,27.5 L2.5,9 L33,9 L33,27.5 L25.5,27.5"/><rect x="10.5" y="21" width="15" height="12.5"/></g><rect x="5.5" y="12.2" width="3.5" height="3.6" fill="#3b74af"/><rect x="11.4" y="12.2" width="3.5" height="3.6" fill="#3b74af"/></svg>
<svg style="position:absolute;left:2751.5px;top:214px;overflow:visible;" width="16" height="11" viewBox="0 0 16 11"><polygon points="0,0 15.6,0 7.8,10" fill="#363c44"/></svg>
<div style="position:absolute;left:2789.7000000000003px;top:199px;width:2.2px;height:37.5px;background:#3b74af;"></div>
<svg style="position:absolute;left:2815px;top:200px;overflow:visible;" width="32" height="36" viewBox="0 0 32 36"><g fill="none" stroke="#3b74af" stroke-width="1.9"><path d="M7,10.5 L3.5,10.5 L3.5,33.5 L28,33.5 L28,10.5 L24.5,10.5"/><path d="M15.5,25.5 L15.5,3 M10,8.5 L15.5,3 L21,8.5"/></g></svg>
<svg style="position:absolute;left:2855.5px;top:213.5px;overflow:visible;" width="16" height="11" viewBox="0 0 16 11"><polygon points="0,0 15.6,0 7.8,10" fill="#363c44"/></svg>
<div style="position:absolute;left:2893.7000000000003px;top:199px;width:2.2px;height:37.5px;background:#3b74af;"></div>
<div style="position:absolute;left:2061px;top:251px;width:0;height:121px;border-left:2px dashed #3b74af;"></div>
<div style="position:absolute;left:2061.5px;top:373px;width:0;height:292px;border-left:1px dotted #c9d5e2;"></div>
<div style="position:absolute;left:2381px;top:251px;width:0;height:121px;border-left:2px dashed #3b74af;"></div>
<div style="position:absolute;left:2381.5px;top:373px;width:0;height:292px;border-left:1px dotted #c9d5e2;"></div>
<div style="position:absolute;left:2781px;top:251px;width:0;height:121px;border-left:2px dashed #3b74af;"></div>
<div style="position:absolute;left:2781.5px;top:373px;width:0;height:292px;border-left:1px dotted #c9d5e2;"></div>
<div style="position:absolute;left:3041px;top:251px;width:0;height:121px;border-left:2px dashed #3b74af;"></div>
<div style="position:absolute;left:3041.5px;top:373px;width:0;height:292px;border-left:1px dotted #c9d5e2;"></div>
<svg style="position:absolute;left:1878px;top:268px;overflow:visible;" width="8" height="28" viewBox="0 0 8 28"><circle cx="4" cy="4" r="3" fill="#3b74af"/><circle cx="4" cy="14" r="3" fill="#3b74af"/><circle cx="4" cy="24" r="3" fill="#3b74af"/></svg>
<svg style="position:absolute;left:2078px;top:268px;overflow:visible;" width="8" height="28" viewBox="0 0 8 28"><circle cx="4" cy="4" r="3" fill="#3b74af"/><circle cx="4" cy="14" r="3" fill="#3b74af"/><circle cx="4" cy="24" r="3" fill="#3b74af"/></svg>
<svg style="position:absolute;left:2396px;top:268px;overflow:visible;" width="8" height="28" viewBox="0 0 8 28"><circle cx="4" cy="4" r="3" fill="#3b74af"/><circle cx="4" cy="14" r="3" fill="#3b74af"/><circle cx="4" cy="24" r="3" fill="#3b74af"/></svg>
<svg style="position:absolute;left:2794px;top:268px;overflow:visible;" width="8" height="28" viewBox="0 0 8 28"><circle cx="4" cy="4" r="3" fill="#3b74af"/><circle cx="4" cy="14" r="3" fill="#3b74af"/><circle cx="4" cy="24" r="3" fill="#3b74af"/></svg>
<svg style="position:absolute;left:3057px;top:268px;overflow:visible;" width="8" height="28" viewBox="0 0 8 28"><circle cx="4" cy="4" r="3" fill="#3b74af"/><circle cx="4" cy="14" r="3" fill="#3b74af"/><circle cx="4" cy="24" r="3" fill="#3b74af"/></svg>
<div style="position:absolute;left:1906.33px;top:270.37px;font-size:25.22px;line-height:25.22px;font-weight:700;color:#3b74af;white-space:nowrap;transform:scaleX(0.8942);transform-origin:0 0;-webkit-text-stroke:0.15px #3b74af;">Read</div>
<div style="position:absolute;left:2106.54px;top:270.17px;font-size:25.22px;line-height:25.22px;font-weight:700;color:#3b74af;white-space:nowrap;transform:scaleX(0.8937);transform-origin:0 0;-webkit-text-stroke:0.15px #3b74af;">NEN system number</div>
<div style="position:absolute;left:2421.32px;top:270.37px;font-size:25.22px;line-height:25.22px;font-weight:700;color:#3b74af;white-space:nowrap;transform:scaleX(0.9025);transform-origin:0 0;-webkit-text-stroke:0.15px #3b74af;">Name of the procurement</div>
<div style="position:absolute;left:2421.35px;top:298.07px;font-size:25.22px;line-height:25.22px;font-weight:700;color:#3b74af;white-space:nowrap;transform:scaleX(0.8832);transform-origin:0 0;-webkit-text-stroke:0.15px #3b74af;">procedure</div>
<div style="position:absolute;left:2818.70px;top:270.37px;font-size:25.22px;line-height:25.22px;font-weight:700;color:#3b74af;white-space:nowrap;transform:scaleX(0.8900);transform-origin:0 0;-webkit-text-stroke:0.15px #3b74af;">Current status of</div>
<div style="position:absolute;left:2819.38px;top:298.07px;font-size:25.22px;line-height:25.22px;font-weight:700;color:#3b74af;white-space:nowrap;transform:scaleX(0.8844);transform-origin:0 0;-webkit-text-stroke:0.15px #3b74af;">the procurement</div>
<div style="position:absolute;left:2818.15px;top:325.57px;font-size:25.22px;line-height:25.22px;font-weight:700;color:#3b74af;white-space:nowrap;transform:scaleX(0.8832);transform-origin:0 0;-webkit-text-stroke:0.15px #3b74af;">procedure</div>
<div style="position:absolute;left:3084.91px;top:270.37px;font-size:25.22px;line-height:25.22px;font-weight:700;color:#3b74af;white-space:nowrap;transform:scaleX(0.8791);transform-origin:0 0;-webkit-text-stroke:0.15px #3b74af;">Contracting authority's</div>
<div style="position:absolute;left:3084.26px;top:298.07px;font-size:25.22px;line-height:25.22px;font-weight:700;color:#3b74af;white-space:nowrap;transform:scaleX(0.9366);transform-origin:0 0;-webkit-text-stroke:0.15px #3b74af;">name</div>
<div style="position:absolute;left:1727px;top:371px;width:1663px;height:2px;background:#d8e1ea;"></div>
<svg style="position:absolute;left:1753.6px;top:392px;overflow:visible;" width="40" height="10" viewBox="0 0 40 10"><circle cx="5.0" cy="5" r="3.4" fill="none" stroke="#3b74af" stroke-width="1.9"/><circle cx="17.2" cy="5" r="3.4" fill="none" stroke="#3b74af" stroke-width="1.9"/><circle cx="29.4" cy="5" r="3.4" fill="none" stroke="#3b74af" stroke-width="1.9"/></svg>
<svg style="position:absolute;left:1805.2px;top:381.2px;overflow:visible;" width="32.6" height="32.6" viewBox="0 0 32.6 32.6"><circle cx="16.3" cy="16.3" r="14.3" fill="none" stroke="#3b74af" stroke-width="1.9"/><rect x="15.200000000000001" y="9.3" width="2.2" height="2.6" fill="#3b74af"/><rect x="15.200000000000001" y="13.3" width="2.2" height="10" fill="#3b74af"/></svg>
<svg style="position:absolute;left:1950px;top:382px;overflow:visible;" width="28" height="26" viewBox="0 0 28 26"><path d="M5.5,13 L12,19.5 L23.5,5.5" fill="none" stroke="#62a84a" stroke-width="4.5"/></svg>
<div style="position:absolute;left:2077.84px;top:383.89px;font-size:26.96px;line-height:26.96px;font-weight:400;color:#000;white-space:nowrap;transform:scaleX(1.0008);transform-origin:0 0;-webkit-text-stroke:0.35px #000;">N006/23/V00008164</div>
<div style="position:absolute;left:2397.80px;top:383.89px;font-size:26.96px;line-height:26.96px;font-weight:400;color:#000;white-space:nowrap;transform:scaleX(0.9051);transform-origin:0 0;-webkit-text-stroke:0.35px #000;">IS Uhlí</div>
<div style="position:absolute;left:2797.36px;top:383.89px;font-size:26.96px;line-height:26.96px;font-weight:400;color:#000;white-space:nowrap;transform:scaleX(0.9939);transform-origin:0 0;-webkit-text-stroke:0.35px #000;">Not terminated</div>
<div style="position:absolute;left:3058.74px;top:383.89px;font-size:26.96px;line-height:26.96px;font-weight:400;color:#000;white-space:nowrap;transform:scaleX(0.9387);transform-origin:0 0;-webkit-text-stroke:0.35px #000;">Zadavatel verze 1 VZ</div>
<div style="position:absolute;left:1727px;top:421px;width:1663px;height:2px;background:#dfe6ee;"></div>
<svg style="position:absolute;left:1753.6px;top:442px;overflow:visible;" width="40" height="10" viewBox="0 0 40 10"><circle cx="5.0" cy="5" r="3.4" fill="none" stroke="#3b74af" stroke-width="1.9"/><circle cx="17.2" cy="5" r="3.4" fill="none" stroke="#3b74af" stroke-width="1.9"/><circle cx="29.4" cy="5" r="3.4" fill="none" stroke="#3b74af" stroke-width="1.9"/></svg>
<svg style="position:absolute;left:1805.2px;top:431.2px;overflow:visible;" width="32.6" height="32.6" viewBox="0 0 32.6 32.6"><circle cx="16.3" cy="16.3" r="14.3" fill="none" stroke="#3b74af" stroke-width="1.9"/><rect x="15.200000000000001" y="9.3" width="2.2" height="2.6" fill="#3b74af"/><rect x="15.200000000000001" y="13.3" width="2.2" height="10" fill="#3b74af"/></svg>
<svg style="position:absolute;left:1952px;top:434px;overflow:visible;" width="24" height="24" viewBox="0 0 24 24"><path d="M5,4.5 L19,18.5 M19,4.5 L5,18.5" stroke="#d33a2e" stroke-width="4"/></svg>
<div style="position:absolute;left:2077.84px;top:433.89px;font-size:26.96px;line-height:26.96px;font-weight:400;color:#000;white-space:nowrap;transform:scaleX(1.0025);transform-origin:0 0;-webkit-text-stroke:0.35px #000;">N006/23/V00007288</div>
<div style="position:absolute;left:2397.98px;top:433.89px;font-size:26.96px;line-height:26.96px;font-weight:400;color:#000;white-space:nowrap;transform:scaleX(0.9377);transform-origin:0 0;-webkit-text-stroke:0.35px #000;">LF_minipříručka "E-aukce mal...</div>
<div style="position:absolute;left:2797.36px;top:433.89px;font-size:26.96px;line-height:26.96px;font-weight:400;color:#000;white-space:nowrap;transform:scaleX(0.9939);transform-origin:0 0;-webkit-text-stroke:0.35px #000;">Not terminated</div>
<div style="position:absolute;left:3059.00px;top:433.89px;font-size:26.96px;line-height:26.96px;font-weight:400;color:#000;white-space:nowrap;transform:scaleX(0.9215);transform-origin:0 0;-webkit-text-stroke:0.35px #000;">TESCO SW a.s. (podpora)</div>
<div style="position:absolute;left:1727px;top:471px;width:1663px;height:2px;background:#dfe6ee;"></div>
<svg style="position:absolute;left:1753.6px;top:492px;overflow:visible;" width="40" height="10" viewBox="0 0 40 10"><circle cx="5.0" cy="5" r="3.4" fill="none" stroke="#3b74af" stroke-width="1.9"/><circle cx="17.2" cy="5" r="3.4" fill="none" stroke="#3b74af" stroke-width="1.9"/><circle cx="29.4" cy="5" r="3.4" fill="none" stroke="#3b74af" stroke-width="1.9"/></svg>
<svg style="position:absolute;left:1805.2px;top:481.2px;overflow:visible;" width="32.6" height="32.6" viewBox="0 0 32.6 32.6"><circle cx="16.3" cy="16.3" r="14.3" fill="none" stroke="#3b74af" stroke-width="1.9"/><rect x="15.200000000000001" y="9.3" width="2.2" height="2.6" fill="#3b74af"/><rect x="15.200000000000001" y="13.3" width="2.2" height="10" fill="#3b74af"/></svg>
<svg style="position:absolute;left:1952px;top:484px;overflow:visible;" width="24" height="24" viewBox="0 0 24 24"><path d="M5,4.5 L19,18.5 M19,4.5 L5,18.5" stroke="#d33a2e" stroke-width="4"/></svg>
<div style="position:absolute;left:2077.84px;top:483.89px;font-size:26.96px;line-height:26.96px;font-weight:400;color:#000;white-space:nowrap;transform:scaleX(1.0025);transform-origin:0 0;-webkit-text-stroke:0.35px #000;">N006/23/V00007285</div>
<div style="position:absolute;left:2399.51px;top:483.89px;font-size:26.96px;line-height:26.96px;font-weight:400;color:#000;white-space:nowrap;transform:scaleX(0.9003);transform-origin:0 0;-webkit-text-stroke:0.35px #000;">TESTOVACÍ VEŘEJNÁ ZAKÁZ...</div>
<div style="position:absolute;left:2797.36px;top:483.89px;font-size:26.96px;line-height:26.96px;font-weight:400;color:#000;white-space:nowrap;transform:scaleX(0.9939);transform-origin:0 0;-webkit-text-stroke:0.35px #000;">Not terminated</div>
<div style="position:absolute;left:3059.00px;top:483.89px;font-size:26.96px;line-height:26.96px;font-weight:400;color:#000;white-space:nowrap;transform:scaleX(0.9215);transform-origin:0 0;-webkit-text-stroke:0.35px #000;">TESCO SW a.s. (podpora)</div>
<div style="position:absolute;left:1727px;top:521px;width:1663px;height:2px;background:#dfe6ee;"></div>
<svg style="position:absolute;left:1753.6px;top:542px;overflow:visible;" width="40" height="10" viewBox="0 0 40 10"><circle cx="5.0" cy="5" r="3.4" fill="none" stroke="#3b74af" stroke-width="1.9"/><circle cx="17.2" cy="5" r="3.4" fill="none" stroke="#3b74af" stroke-width="1.9"/><circle cx="29.4" cy="5" r="3.4" fill="none" stroke="#3b74af" stroke-width="1.9"/></svg>
<svg style="position:absolute;left:1805.2px;top:531.2px;overflow:visible;" width="32.6" height="32.6" viewBox="0 0 32.6 32.6"><circle cx="16.3" cy="16.3" r="14.3" fill="none" stroke="#3b74af" stroke-width="1.9"/><rect x="15.200000000000001" y="9.3" width="2.2" height="2.6" fill="#3b74af"/><rect x="15.200000000000001" y="13.3" width="2.2" height="10" fill="#3b74af"/></svg>
<svg style="position:absolute;left:1952px;top:534px;overflow:visible;" width="24" height="24" viewBox="0 0 24 24"><path d="M5,4.5 L19,18.5 M19,4.5 L5,18.5" stroke="#d33a2e" stroke-width="4"/></svg>
<div style="position:absolute;left:2077.84px;top:533.89px;font-size:26.96px;line-height:26.96px;font-weight:400;color:#000;white-space:nowrap;transform:scaleX(1.0030);transform-origin:0 0;-webkit-text-stroke:0.35px #000;">N006/23/V00007281</div>
<div style="position:absolute;left:2397.99px;top:533.89px;font-size:26.96px;line-height:26.96px;font-weight:400;color:#000;white-space:nowrap;transform:scaleX(0.9300);transform-origin:0 0;-webkit-text-stroke:0.35px #000;">LF_minipříručka "E-aukce po h...</div>
<div style="position:absolute;left:2797.36px;top:533.89px;font-size:26.96px;line-height:26.96px;font-weight:400;color:#000;white-space:nowrap;transform:scaleX(0.9939);transform-origin:0 0;-webkit-text-stroke:0.35px #000;">Not terminated</div>
<div style="position:absolute;left:3059.00px;top:533.89px;font-size:26.96px;line-height:26.96px;font-weight:400;color:#000;white-space:nowrap;transform:scaleX(0.9215);transform-origin:0 0;-webkit-text-stroke:0.35px #000;">TESCO SW a.s. (podpora)</div>
<div style="position:absolute;left:1727px;top:571px;width:1663px;height:2px;background:#dfe6ee;"></div>
<svg style="position:absolute;left:1753.6px;top:592px;overflow:visible;" width="40" height="10" viewBox="0 0 40 10"><circle cx="5.0" cy="5" r="3.4" fill="none" stroke="#3b74af" stroke-width="1.9"/><circle cx="17.2" cy="5" r="3.4" fill="none" stroke="#3b74af" stroke-width="1.9"/><circle cx="29.4" cy="5" r="3.4" fill="none" stroke="#3b74af" stroke-width="1.9"/></svg>
<svg style="position:absolute;left:1805.2px;top:581.2px;overflow:visible;" width="32.6" height="32.6" viewBox="0 0 32.6 32.6"><circle cx="16.3" cy="16.3" r="14.3" fill="none" stroke="#3b74af" stroke-width="1.9"/><rect x="15.200000000000001" y="9.3" width="2.2" height="2.6" fill="#3b74af"/><rect x="15.200000000000001" y="13.3" width="2.2" height="10" fill="#3b74af"/></svg>
<svg style="position:absolute;left:1952px;top:584px;overflow:visible;" width="24" height="24" viewBox="0 0 24 24"><path d="M5,4.5 L19,18.5 M19,4.5 L5,18.5" stroke="#d33a2e" stroke-width="4"/></svg>
<div style="position:absolute;left:2077.84px;top:583.89px;font-size:26.96px;line-height:26.96px;font-weight:400;color:#000;white-space:nowrap;transform:scaleX(1.0019);transform-origin:0 0;-webkit-text-stroke:0.35px #000;">N006/23/V00007280</div>
<div style="position:absolute;left:2399.51px;top:583.89px;font-size:26.96px;line-height:26.96px;font-weight:400;color:#000;white-space:nowrap;transform:scaleX(0.9003);transform-origin:0 0;-webkit-text-stroke:0.35px #000;">TESTOVACÍ VEŘEJNÁ ZAKÁZ...</div>
<div style="position:absolute;left:2797.36px;top:583.89px;font-size:26.96px;line-height:26.96px;font-weight:400;color:#000;white-space:nowrap;transform:scaleX(0.9939);transform-origin:0 0;-webkit-text-stroke:0.35px #000;">Not terminated</div>
<div style="position:absolute;left:3059.00px;top:583.89px;font-size:26.96px;line-height:26.96px;font-weight:400;color:#000;white-space:nowrap;transform:scaleX(0.9215);transform-origin:0 0;-webkit-text-stroke:0.35px #000;">TESCO SW a.s. (podpora)</div>
<div style="position:absolute;left:1727px;top:621px;width:1663px;height:2px;background:#dfe6ee;"></div>
<svg style="position:absolute;left:1753.6px;top:642px;overflow:visible;" width="40" height="10" viewBox="0 0 40 10"><circle cx="5.0" cy="5" r="3.4" fill="none" stroke="#3b74af" stroke-width="1.9"/><circle cx="17.2" cy="5" r="3.4" fill="none" stroke="#3b74af" stroke-width="1.9"/><circle cx="29.4" cy="5" r="3.4" fill="none" stroke="#3b74af" stroke-width="1.9"/></svg>
<svg style="position:absolute;left:1805.2px;top:631.2px;overflow:visible;" width="32.6" height="32.6" viewBox="0 0 32.6 32.6"><circle cx="16.3" cy="16.3" r="14.3" fill="none" stroke="#3b74af" stroke-width="1.9"/><rect x="15.200000000000001" y="9.3" width="2.2" height="2.6" fill="#3b74af"/><rect x="15.200000000000001" y="13.3" width="2.2" height="10" fill="#3b74af"/></svg>
<svg style="position:absolute;left:1952px;top:634px;overflow:visible;" width="24" height="24" viewBox="0 0 24 24"><path d="M5,4.5 L19,18.5 M19,4.5 L5,18.5" stroke="#d33a2e" stroke-width="4"/></svg>
<div style="position:absolute;left:2077.84px;top:633.89px;font-size:26.96px;line-height:26.96px;font-weight:400;color:#000;white-space:nowrap;transform:scaleX(1.0030);transform-origin:0 0;-webkit-text-stroke:0.35px #000;">N006/23/V00007249</div>
<div style="position:absolute;left:2397.95px;top:633.89px;font-size:26.96px;line-height:26.96px;font-weight:400;color:#000;white-space:nowrap;transform:scaleX(0.9485);transform-origin:0 0;-webkit-text-stroke:0.35px #000;">LF_RD (elektronický katalog)</div>
<div style="position:absolute;left:2799.50px;top:633.89px;font-size:26.96px;line-height:26.96px;font-weight:400;color:#000;white-space:nowrap;transform:scaleX(0.9586);transform-origin:0 0;-webkit-text-stroke:0.35px #000;">Awarded</div>
<div style="position:absolute;left:3059.00px;top:633.89px;font-size:26.96px;line-height:26.96px;font-weight:400;color:#000;white-space:nowrap;transform:scaleX(0.9215);transform-origin:0 0;-webkit-text-stroke:0.35px #000;">TESCO SW a.s. (podpora)</div>
<div style="position:absolute;left:2207.6px;top:171.6px;width:476.0999999999999px;height:72.6px;border:5px solid #e63e28;"></div>
</body></html>
